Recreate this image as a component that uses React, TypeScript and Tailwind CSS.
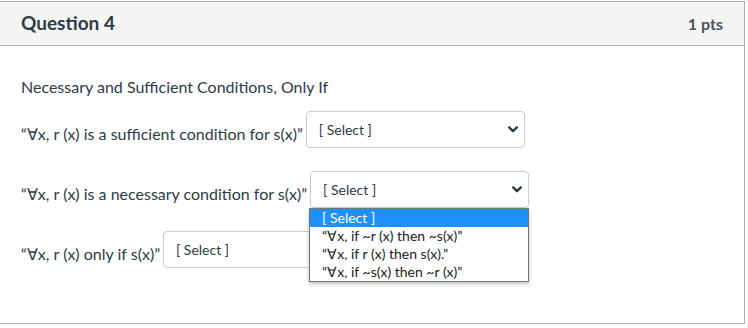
import React from 'react';

const OPTIONS = [
  '[ Select ]',
  '“∀x, if ~r (x) then ~s(x)”',
  '“∀x, if r (x) then s(x).”',
  '“∀x, if ~s(x) then ~r (x)”',
];

function Chevron() {
  return (
    <svg width="10" height="7" viewBox="0 0 10 7" className="shrink-0">
      <path d="M1.2 1.4 L5 5.2 L8.8 1.4" fill="none" stroke="#2d3b45" strokeWidth="2.4" strokeLinecap="round" strokeLinejoin="round" />
    </svg>
  );
}

function FakeSelect({ open = false }: { open?: boolean }) {
  return (
    <div className="relative shrink-0">
      <div className="w-[219px] h-[37px] rounded-[4px] border border-[#c7cdd1] bg-white flex items-center justify-between pl-[12px] pr-[6px]">
        <span className="text-[14px] text-[#2d3b45]">[ Select ]</span>
        <Chevron />
      </div>

      {/* open native list, drawn over the row below */}
      {open && (
        <div className="absolute left-[-1px] top-[37px] z-10 w-[220px] border border-[#767676] bg-white shadow-[0_2px_4px_rgba(0,0,0,0.25)]">
          {OPTIONS.map((opt, i) => (
            <div
              key={opt}
              className={
                i === 0
                  ? 'h-[18px] leading-[18px] pl-[12px] text-[14px] bg-[#1e90ff] text-white'
                  : 'h-[18px] leading-[18px] pl-[12px] text-[14px] text-[#222]'
              }
            >
              {opt}
            </div>
          ))}
        </div>
      )}
    </div>
  );
}

function Row({ label, open }: { label: string; open?: boolean }) {
  return (
    <div className="flex items-center gap-[3px]">
      <span className="mt-2 text-[16px] leading-[22px] text-[#2d3b45] whitespace-nowrap">{label}</span>
      <FakeSelect open={open} />
    </div>
  );
}

export default function App() {
  return (
    <div className="w-[748px] h-[328px] bg-white overflow-hidden" style={{ fontFamily: 'Lato, "Open Sans", sans-serif' }}>
      <div className="mt-px -ml-px w-[746px] border border-[#adadad]">
        {/* header */}
        <div className="h-[44px] bg-[#f5f5f5] border-b border-[#adadad] flex items-center justify-between pl-[21px] pr-[21px]">
          <h2 className="text-[19px] font-bold text-[#2d3b45]">Question 4</h2>
          <span className="text-[16px] font-bold text-[#4a555c]">1 pts</span>
        </div>

        {/* body */}
        <div className="pl-[21px] pt-[30px] pb-[55px]">
          <p className="text-[16px] leading-[22px] text-[#2d3b45]">Necessary and Sufficient Conditions, Only If</p>
          <div className="mt-[13px] flex flex-col gap-[23px]">
            <Row label="“∀x, r (x) is a sufficient condition for s(x)”" />
            <Row label="“∀x, r (x) is a necessary condition for s(x)”" open />
            <Row label="“∀x, r (x) only if s(x)”" />
          </div>
        </div>
      </div>
    </div>
  );
}
